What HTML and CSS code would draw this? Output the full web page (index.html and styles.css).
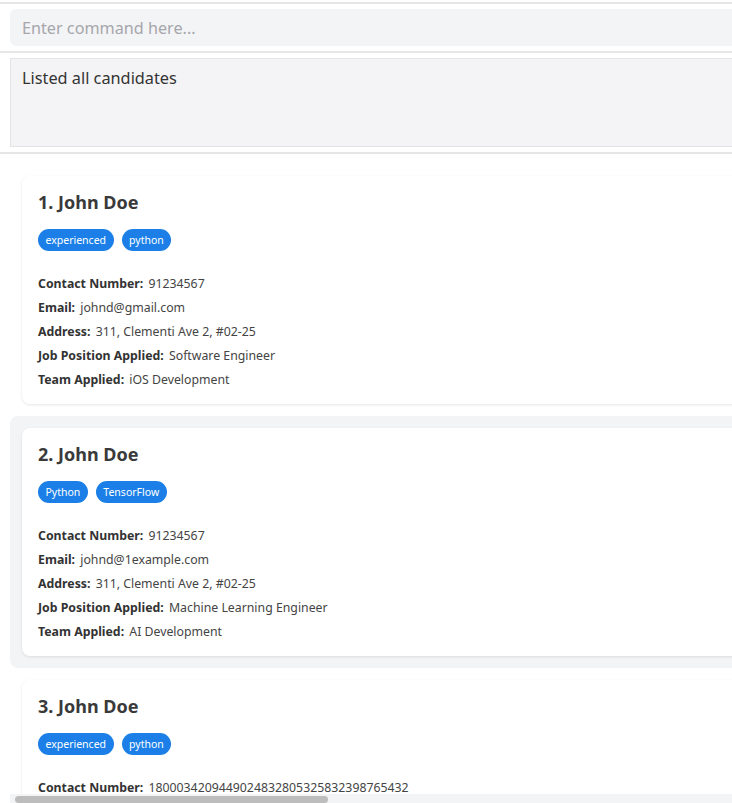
FILE: index.html
```html
<!DOCTYPE html>
<html>
<head>
<meta charset="utf-8">
<link rel="stylesheet" href="styles.css">
</head>
<body>
<div class="app">
  <div class="rule top"></div>
  <div class="command">
    <div class="command-box">Enter command here...</div>
  </div>
  <div class="rule"></div>
  <div class="result">
    <div class="result-box">Listed all candidates</div>
  </div>
  <div class="rule"></div>
  <div class="list">
    <div class="cell">
      <div class="card">
        <div class="name">1. John Doe</div>
        <div class="tags"><span class="tag">experienced</span><span class="tag">python</span></div>
        <div class="fields">
          <div class="field"><b>Contact Number:</b> 91234567</div>
          <div class="field"><b>Email:</b> johnd@gmail.com</div>
          <div class="field"><b>Address:</b> 311, Clementi Ave 2, #02-25</div>
          <div class="field"><b>Job Position Applied:</b> Software Engineer</div>
          <div class="field"><b>Team Applied:</b> iOS Development</div>
        </div>
      </div>
    </div>
    <div class="cell selected">
      <div class="card">
        <div class="name">2. John Doe</div>
        <div class="tags"><span class="tag">Python</span><span class="tag">TensorFlow</span></div>
        <div class="fields">
          <div class="field"><b>Contact Number:</b> 91234567</div>
          <div class="field"><b>Email:</b> johnd@1example.com</div>
          <div class="field"><b>Address:</b> 311, Clementi Ave 2, #02-25</div>
          <div class="field"><b>Job Position Applied:</b> Machine Learning Engineer</div>
          <div class="field"><b>Team Applied:</b> AI Development</div>
        </div>
      </div>
    </div>
    <div class="cell">
      <div class="card">
        <div class="name">3. John Doe</div>
        <div class="tags"><span class="tag">experienced</span><span class="tag">python</span></div>
        <div class="fields">
          <div class="field"><b>Contact Number:</b> 1800034209449024832805325832398765432</div>
        </div>
      </div>
    </div>
    <div class="hscroll"><div class="thumb"></div></div>
  </div>
</div>
</body>
</html>
```

FILE: styles.css
```css
html, body {
  margin: 0;
  padding: 0;
  background: #ffffff;
  overflow: hidden;
}
body {
  width: 732px;
  height: 803px;
  font-family: "Noto Sans", "Open Sans", sans-serif;
  color: #3b3b3b;
}
.app {
  display: flex;
  flex-direction: column;
  height: 803px;
  width: 800px;
}
.rule {
  height: 2px;
  background: #e6e6e6;
  flex: none;
}
.rule.top {
  margin-top: 2px;
}
.command {
  padding: 5px 0 5px 10px;
}
.command-box {
  height: 37px;
  background: #f3f4f6;
  border-radius: 6px;
  box-sizing: border-box;
  padding-left: 12px;
  display: flex;
  align-items: center;
  font-size: 16.2px;
  color: #a6a6ab;
}
.result {
  padding: 5px 0 5px 10px;
}
.result-box {
  height: 89px;
  box-sizing: border-box;
  background: #f4f4f6;
  border: 1px solid #e4e4e6;
  padding: 7px 11px;
  font-size: 16.3px;
  line-height: 24px;
  color: #333333;
}
.list {
  position: relative;
  flex: 1;
  overflow: hidden;
  padding-top: 10px;
}
.cell {
  margin-left: 10px;
  padding: 12px;
  border-radius: 8px;
}
.cell.selected {
  background: #f3f4f6;
}
.card {
  background: #ffffff;
  border-radius: 8px;
  box-shadow: 0 1px 3px rgba(0, 0, 0, 0.10);
  padding: 14px 16px 12px;
  height: 228px;
  box-sizing: border-box;
}
.name {
  font-size: 18px;
  font-weight: 700;
  line-height: 24px;
  color: #3a3a3a;
}
.tags {
  display: flex;
  gap: 8px;
  margin-top: 15px;
}
.tag {
  background: #1b7fe7;
  color: #ffffff;
  font-size: 10.5px;
  height: 22px;
  line-height: 22px;
  padding: 0 7.5px;
  border-radius: 11px;
}
.fields {
  margin-top: 21px;
}
.field {
  font-size: 12.3px;
  line-height: 24px;
  color: #444444;
  white-space: nowrap;
}
.field b {
  color: #333333;
  font-weight: 700;
  margin-right: 2px;
}
.hscroll {
  position: absolute;
  left: 10px;
  right: 0;
  bottom: 0;
  height: 9px;
  background: #f3f4f6;
}
.thumb {
  position: absolute;
  left: 5px;
  top: 2px;
  width: 313px;
  height: 7px;
  border-radius: 4px;
  background: #bdbdbd;
}
```
